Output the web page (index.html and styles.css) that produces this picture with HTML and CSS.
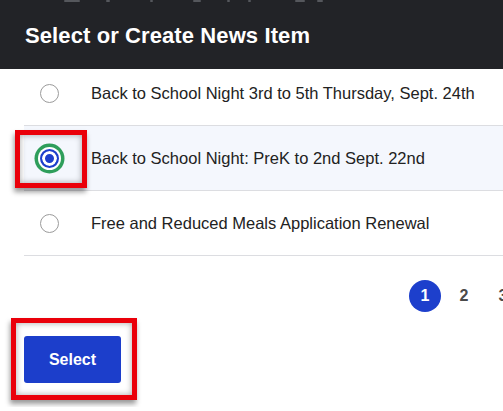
FILE: index.html
```html
<!DOCTYPE html>
<html lang="en">
<head>
<meta charset="utf-8">
<title>Select or Create News Item</title>
<link rel="stylesheet" href="styles.css">
</head>
<body>
<div class="modal">
  <header class="modal-header">
    <div class="ghost-strip">
      <span class="g g1"></span><span class="g g2"></span><span class="g g3"></span><span class="g g4"></span><span class="g g5"></span><span class="g g6"></span><span class="g g7"></span><span class="g g8"></span>
    </div>
    <h1 class="title">Select or Create News Item</h1>
  </header>
  <ul class="list">
    <li class="row">
      <span class="radio"></span>
      <span class="label">Back to School Night 3rd to 5th Thursday, Sept. 24th</span>
    </li>
    <li class="row row-selected">
      <span class="radio radio-checked"></span>
      <span class="label">Back to School Night: PreK to 2nd Sept. 22nd</span>
    </li>
    <li class="row">
      <span class="radio"></span>
      <span class="label">Free and Reduced Meals Application Renewal</span>
    </li>
  </ul>
  <nav class="pagination">
    <span class="page page-current">1</span>
    <span class="page">2</span>
    <span class="page">3</span>
  </nav>
  <div class="footer">
    <button class="btn-primary">Select</button>
  </div>
  <div class="annot annot-radio"></div>
  <div class="annot annot-button"></div>
</div>
</body>
</html>
```
FILE: styles.css
```css
html, body {
  margin: 0;
  padding: 0;
  background: #ffffff;
  overflow: hidden;
}
body {
  font-family: "Liberation Sans", Arial, sans-serif;
  color: #222222;
}
.modal {
  position: relative;
  width: 543px;
  background: #ffffff;
}
.modal-header {
  position: relative;
  z-index: 1;
  height: 69px;
  box-sizing: border-box;
  background: #222327;
  display: flex;
  flex-direction: column;
}
.ghost-strip {
  height: 3px;
  display: flex;
  gap: 0;
  padding-left: 64px;
  overflow: hidden;
}
.g {
  display: block;
  height: 2px;
  background: #55575c;
  border-radius: 1px;
}
.g1 { width: 16px; margin-right: 26px; }
.g2 { width: 4px; margin-right: 40px; }
.g3 { width: 3px; margin-right: 40px; }
.g4 { width: 8px; margin-right: 26px; }
.g5 { width: 3px; margin-right: 18px; }
.g6 { width: 3px; margin-right: 44px; }
.g7 { width: 10px; margin-right: 12px; }
.g8 { width: 6px; }
.title {
  margin: 20px 0 0 25px;
  font-size: 22px;
  line-height: 26px;
  font-weight: 700;
  color: #ffffff;
  letter-spacing: 0.1px;
}
.list {
  list-style: none;
  margin: -8px 0 0 24px;
  padding: 0;
}
.row {
  height: 64px;
  border-bottom: 1px solid #dcdde1;
  display: flex;
  align-items: center;
  gap: 32px;
  padding-left: 16px;
}
.row-selected {
  background: #f4f7fd;
}
.radio {
  flex: none;
  width: 19px;
  height: 19px;
  box-sizing: border-box;
  border-radius: 50%;
  border: 1px solid #9b9b9b;
  background: #ffffff;
}
.radio-checked {
  border: 2px solid #1d3fcc;
  background: #1d3fcc;
  box-shadow: inset 0 0 0 3px #ffffff, 0 0 0 2px #ffffff, 0 0 0 5.5px #2e9e5b;
}
.label {
  font-size: 16.5px;
  line-height: 20px;
  color: #222222;
  white-space: nowrap;
}
.pagination {
  margin-top: 24px;
  padding-right: 24px;
  display: flex;
  justify-content: flex-end;
  gap: 7px;
}
.page {
  width: 32px;
  height: 32px;
  border-radius: 50%;
  display: flex;
  align-items: center;
  justify-content: center;
  font-size: 16px;
  font-weight: 700;
  color: #4a4a4a;
}
.page-current {
  background: #1d3fcc;
  color: #ffffff;
}
.footer {
  padding: 24px;
}
.btn-primary {
  display: block;
  width: 97px;
  height: 47px;
  border: none;
  border-radius: 3px;
  background: #1c3ecb;
  color: #ffffff;
  font-family: "Liberation Sans", Arial, sans-serif;
  font-size: 16px;
  font-weight: 700;
  padding: 0;
}
.annot {
  position: absolute;
  box-sizing: border-box;
  border: 5px solid #ea000a;
  box-shadow: -1px 4px 5px rgba(0, 0, 0, 0.4), inset 0 0 6px rgba(0, 0, 0, 0.35);
  z-index: 2;
}
.annot-radio {
  left: 15px;
  top: 130px;
  width: 72px;
  height: 58px;
}
.annot-button {
  left: 11px;
  top: 318px;
  width: 126px;
  height: 82px;
}
```
